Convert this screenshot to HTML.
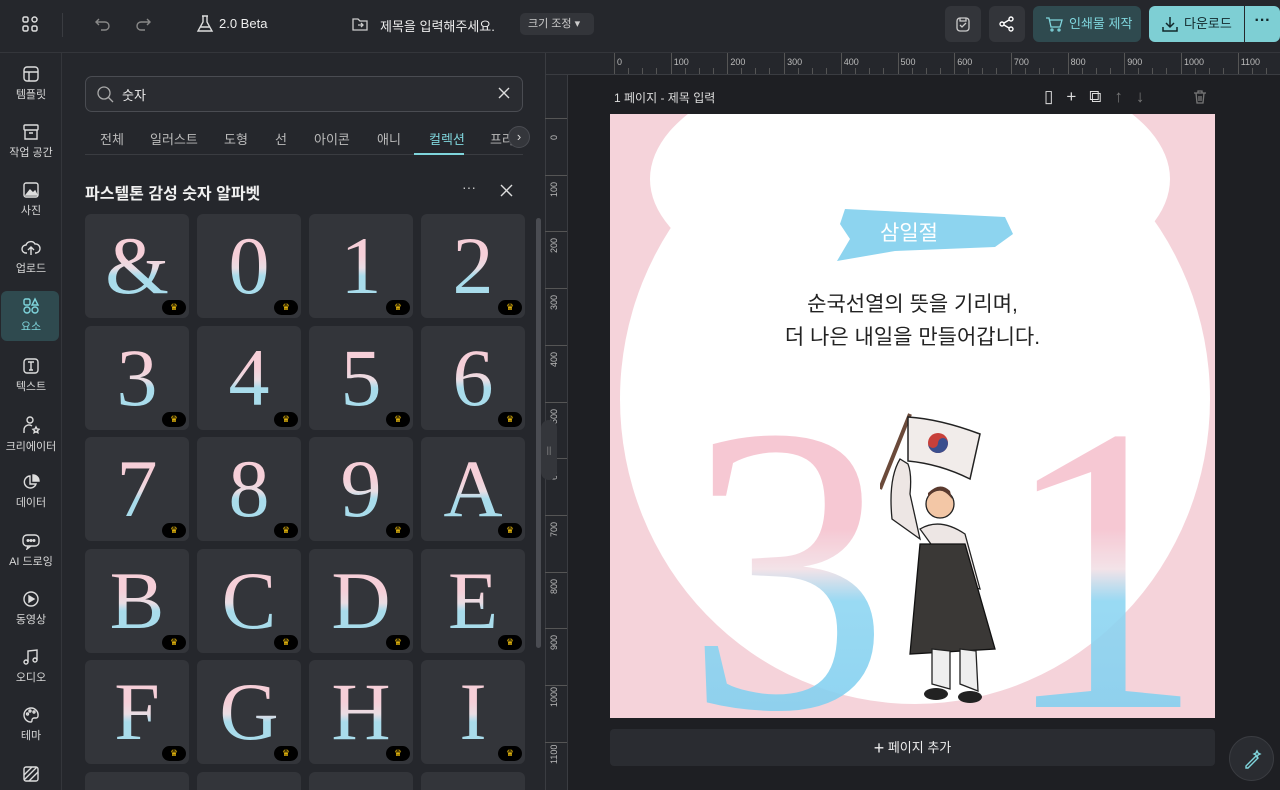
<!DOCTYPE html>
<html style="overflow:hidden;width:1280px;height:790px"><head><meta charset="utf-8"><style>
*{box-sizing:border-box;margin:0;padding:0}
body{width:1280px;height:790px;overflow:hidden;background:#1e1f23;font-family:"Liberation Sans","Noto Sans CJK KR",sans-serif;color:#e6e6e6;position:relative}
.abs{position:absolute}
.top{left:0;top:0;width:1280px;height:53px;background:#25272c;border-bottom:1px solid #34363b}
.rail{left:0;top:53px;width:62px;height:737px;background:#25272c;border-right:1px solid #34363b;overflow:hidden}
.item{position:absolute;left:0;width:62px;text-align:center;font-size:11px;color:#d8d8d8}
.item svg{display:block;margin:0 auto 3px}
.panel{left:62px;top:53px;width:483px;height:737px;background:#25272c;overflow:hidden}
.tile{position:absolute;width:104px;height:104px;background:#33353a;border-radius:6px;overflow:hidden}
.tile span{position:absolute;left:0;right:0;top:2px;text-align:center;font-family:"Liberation Serif",serif;font-size:82px;line-height:100px;background:linear-gradient(#f6cfd8 40%,#eadde3 52%,#a9dceb 60%);-webkit-background-clip:text;background-clip:text;color:transparent}
.crown{position:absolute;right:3px;bottom:3px;width:24px;height:15px;background:#000;border-radius:8px;color:#f4c20d;font-size:9px;text-align:center;line-height:15px}
.btn{position:absolute;top:6px;height:36px;border-radius:6px}
</style></head><body>
<div class="abs top">
 <svg class="abs" style="left:21px;top:15px" width="18" height="18" viewBox="0 0 18 18" fill="none" stroke="#ddd" stroke-width="1.5"><rect x="2" y="2" width="5" height="5" rx="1.5"/><rect x="11" y="2" width="5" height="5" rx="2.5"/><rect x="2" y="11" width="5" height="5" rx="1.5"/><rect x="11" y="11" width="5" height="5" rx="1.5"/></svg>
 <div class="abs" style="left:62px;top:13px;width:1px;height:24px;background:#3a3c41"></div>
 <svg class="abs" style="left:94px;top:15px" width="18" height="18" viewBox="0 0 18 18" fill="none" stroke="#888" stroke-width="1.4"><path d="M5 4L2 7l3 3M2 7h9a4 4 0 010 8H7"/></svg>
 <svg class="abs" style="left:134px;top:15px" width="18" height="18" viewBox="0 0 18 18" fill="none" stroke="#888" stroke-width="1.4"><path d="M13 4l3 3-3 3M16 7H7a4 4 0 000 8h4"/></svg>
 <svg class="abs" style="left:196px;top:14px" width="18" height="20" viewBox="0 0 18 20" fill="none" stroke="#ddd" stroke-width="1.4"><path d="M6 2h6M7 2v6L2 17h14L11 8V2M4 13h10"/></svg>
 <div class="abs" style="left:219px;top:16px;font-size:13px;color:#eee">2.0 Beta</div>
 <svg class="abs" style="left:351px;top:15px" width="18" height="18" viewBox="0 0 18 18" fill="none" stroke="#ccc" stroke-width="1.3"><path d="M2 4h5l2 2h7v9H2z"/><path d="M7 10h5M10 8l2 2-2 2"/></svg>
 <div class="abs" style="left:380px;top:16px;font-size:13px;color:#eee">제목을 입력해주세요.</div>
 <div class="abs" style="left:520px;top:13px;width:74px;height:22px;background:#33353a;border-radius:5px;font-size:11px;color:#ccc;line-height:22px;padding-left:8px">크기 조정 ▾</div>
 <div class="btn" style="left:945px;width:36px;background:#33353a"><svg style="margin:9px" width="18" height="18" viewBox="0 0 18 18" fill="none" stroke="#ccc" stroke-width="1.3"><rect x="3" y="3" width="12" height="13" rx="3"/><path d="M6 3v3h6V3M6 10l2 2 4-4"/></svg></div>
 <div class="btn" style="left:989px;width:36px;background:#33353a"><svg style="margin:9px" width="18" height="18" viewBox="0 0 18 18" fill="none" stroke="#fff" stroke-width="1.4"><circle cx="4" cy="9" r="2"/><circle cx="13" cy="4" r="2"/><circle cx="13" cy="14" r="2"/><path d="M6 8l5-3M6 10l5 3"/></svg></div>
 <div class="btn" style="left:1033px;width:108px;background:#2f4a4f;font-size:13px;line-height:36px;color:#7fd5dc;padding-left:36px">인쇄물 제작<svg class="abs" style="left:12px;top:9px" width="18" height="18" viewBox="0 0 18 18" fill="none" stroke="#7fd5dc" stroke-width="1.3"><path d="M1 3h3l2 9h9l2-7H5"/><circle cx="7" cy="15" r="1"/><circle cx="14" cy="15" r="1"/></svg></div>
 <div class="btn" style="left:1149px;width:95px;background:#7ecfd4;border-radius:6px 0 0 6px;font-size:13px;line-height:36px;color:#12282b;padding-left:35px">다운로드<svg class="abs" style="left:12px;top:9px" width="18" height="18" viewBox="0 0 18 18" fill="none" stroke="#12282b" stroke-width="1.5"><path d="M9 2v9M5 8l4 4 4-4M2 12v4h14v-4"/></svg></div>
 <div class="btn" style="left:1245px;width:35px;background:#7ecfd4;border-radius:0 6px 6px 0;color:#12282b;text-align:center;line-height:30px;font-weight:bold">···</div>
</div>

<div class="abs rail">
 <div class="item" style="top:12px"><svg width="18" height="18" viewBox="0 0 18 18" fill="none" stroke="#ddd" stroke-width="1.4"><rect x="2" y="2" width="14" height="14" rx="3"/><path d="M2 7h14M7 7v9"/></svg>템플릿</div>
 <div class="item" style="top:70px"><svg width="18" height="18" viewBox="0 0 18 18" fill="none" stroke="#ddd" stroke-width="1.4"><rect x="2" y="2" width="14" height="5" rx="1"/><path d="M3 7v9h12V7M7 10h4"/></svg>작업 공간</div>
 <div class="item" style="top:128px"><svg width="18" height="18" viewBox="0 0 18 18" fill="none" stroke="#ddd" stroke-width="1.4"><rect x="2" y="2" width="14" height="14" rx="2"/><path d="M4 14l4-5 3 3 2-2 2 4z" fill="#ddd"/></svg>사진</div>
 <div class="item" style="top:186px"><svg width="20" height="18" viewBox="0 0 20 18" fill="none" stroke="#ddd" stroke-width="1.4"><path d="M6 14H5a4 4 0 010-8 5 5 0 019-1 4 4 0 011 9h-1M10 16V9M7 11l3-3 3 3"/></svg>업로드</div>
 <div class="abs" style="left:1px;top:238px;width:58px;height:50px;background:#2f4a4f;border-radius:6px"></div>
 <div class="item" style="top:244px;color:#7fd5dc"><svg width="18" height="18" viewBox="0 0 18 18" fill="none" stroke="#7fd5dc" stroke-width="1.4"><rect x="2" y="2" width="6" height="6" rx="1.5"/><path d="M13 2l3 6h-6z"/><rect x="2" y="10" width="6" height="6" rx="3"/><rect x="10" y="10" width="6" height="6" rx="3"/></svg>요소</div>
 <div class="item" style="top:304px"><svg width="18" height="18" viewBox="0 0 18 18" fill="none" stroke="#ddd" stroke-width="1.4"><rect x="2" y="2" width="14" height="14" rx="3"/><path d="M6 5h6M9 5v8M7 13h4"/></svg>텍스트</div>
 <div class="item" style="top:362px"><svg width="18" height="20" viewBox="0 0 18 20" fill="none" stroke="#ddd" stroke-width="1.4"><circle cx="8" cy="5" r="3"/><path d="M2 18v-3a5 5 0 018-4"/><path d="M14 12l1 2 2 .3-1.5 1.4.4 2-1.9-1-1.9 1 .4-2L11 14.3l2-.3z"/></svg>크리에이터</div>
 <div class="item" style="top:420px"><svg width="18" height="18" viewBox="0 0 18 18" fill="none" stroke="#ddd" stroke-width="1.4"><path d="M8 3a6 6 0 106 8H8z"/><path d="M11 2v6h6a6 6 0 00-6-6z" fill="#ddd"/></svg>데이터</div>
 <div class="item" style="top:479px"><svg width="20" height="18" viewBox="0 0 20 18" fill="none" stroke="#ddd" stroke-width="1.4"><rect x="2" y="3" width="16" height="11" rx="4"/><path d="M7 14l-1 3 4-3"/><circle cx="7" cy="8.5" r=".8" fill="#ddd"/><circle cx="10" cy="8.5" r=".8" fill="#ddd"/><circle cx="13" cy="8.5" r=".8" fill="#ddd"/></svg>AI 드로잉</div>
 <div class="item" style="top:537px"><svg width="18" height="18" viewBox="0 0 18 18" fill="none" stroke="#ddd" stroke-width="1.4"><circle cx="9" cy="9" r="7"/><path d="M7 6l5 3-5 3z" fill="#ddd"/></svg>동영상</div>
 <div class="item" style="top:595px"><svg width="18" height="18" viewBox="0 0 18 18" fill="none" stroke="#ddd" stroke-width="1.4"><path d="M6 14V3l9-1v10"/><circle cx="4" cy="14" r="2"/><circle cx="13" cy="12" r="2"/></svg>오디오</div>
 <div class="item" style="top:653px"><svg width="18" height="18" viewBox="0 0 18 18" fill="none" stroke="#ddd" stroke-width="1.4"><path d="M9 2a7 7 0 100 14c1 0 1-1 1-2s1-2 2-2h2a2 2 0 002-2 7 7 0 00-7-8z"/><circle cx="5.5" cy="8" r="1"/><circle cx="8" cy="5" r="1"/><circle cx="12" cy="6" r="1"/></svg>테마</div>
 <svg class="abs" style="left:22px;top:712px" width="18" height="18" viewBox="0 0 18 18" fill="none" stroke="#ddd" stroke-width="1.4"><rect x="2" y="2" width="14" height="14" rx="2"/><path d="M2 10l8-8M2 15L15 2M7 16l9-9"/></svg>
</div>

<div class="abs panel">
 <div class="abs" style="left:23px;top:23px;width:438px;height:36px;border:1px solid #4a4c52;border-radius:7px;background:#2a2c31"></div>
 <svg class="abs" style="left:34px;top:32px" width="18" height="18" viewBox="0 0 18 18" fill="none" stroke="#aaa" stroke-width="1.3"><circle cx="8" cy="8" r="6"/><path d="M12.5 12.5L17 17"/></svg>
 <div class="abs" style="left:60px;top:32px;font-size:13px;color:#eee">숫자</div>
 <svg class="abs" style="left:436px;top:34px" width="12" height="12" viewBox="0 0 12 12" stroke="#ddd" stroke-width="1.4"><path d="M1 1l10 10M11 1L1 11"/></svg>
 <div class="abs" style="left:23px;top:76px;font-size:13px;color:#bbb;white-space:nowrap">
  <span style="position:absolute;left:15px">전체</span><span style="position:absolute;left:65px">일러스트</span><span style="position:absolute;left:139px">도형</span><span style="position:absolute;left:190px">선</span><span style="position:absolute;left:229px">아이콘</span><span style="position:absolute;left:292px">애니</span><span style="position:absolute;left:344px;color:#7fd5dc">컬렉션</span><span style="position:absolute;left:405px">프라</span>
 </div>
 <div class="abs" style="left:23px;top:101px;width:438px;height:1px;background:#3a3c41"></div>
 <div class="abs" style="left:352px;top:100px;width:50px;height:2px;background:#7fd5dc"></div>
 <div class="abs" style="left:446px;top:73px;width:22px;height:22px;border-radius:11px;background:#34363b;border:1px solid #4a4c52;color:#ddd;font-size:13px;text-align:center;line-height:19px">›</div>
 <div class="abs" style="left:23px;top:127px;font-size:16px;font-weight:bold;color:#f0f0f0">파스텔톤 감성 숫자 알파벳</div>
 <div class="abs" style="left:400px;top:126px;font-size:14px;color:#ccc">···</div>
 <svg class="abs" style="left:438px;top:131px" width="13" height="13" viewBox="0 0 13 13" stroke="#ddd" stroke-width="1.4"><path d="M1 1l11 11M12 1L1 12"/></svg>
 <div id="tiles" class="abs" style="left:0;top:0;width:483px;height:737px;overflow:hidden"></div>
 <div class="abs" style="left:474px;top:165px;width:5px;height:430px;background:#4a4c52;border-radius:3px"></div>
</div>

<div class="abs" style="left:545px;top:53px;width:735px;height:22px;background:#25272c;border-bottom:1px solid #3a3c41"></div>
<div class="abs" style="left:545px;top:75px;width:23px;height:715px;background:#25272c;border-right:1px solid #3a3c41"></div>
<div class="abs" style="left:545px;top:53px;width:1px;height:737px;background:#3a3c41"></div>
<div id="rul" class="abs" style="left:0;top:0;width:1280px;height:790px;overflow:hidden"></div>
<div class="abs" style="left:541px;top:420px;width:16px;height:60px;background:#34363b;border-radius:8px;color:#888;font-size:9px;text-align:center;line-height:60px">||</div>

<div class="abs" style="left:614px;top:89px;font-size:12px;color:#ddd">1 페이지 - 제목 입력</div>
<div class="abs" style="left:1044px;top:87px;font-size:17px;color:#ddd;letter-spacing:13px">▯+⧉<span style="color:#777">↑↓</span></div>
<svg class="abs" style="left:1192px;top:89px" width="16" height="16" viewBox="0 0 16 16" fill="none" stroke="#777" stroke-width="1.3"><path d="M2 4h12M6 4V2h4v2M4 4l1 10h6l1-10M7 7v5M9 7v5"/></svg>

<div class="abs" style="left:610px;top:114px;width:605px;height:604px;overflow:hidden;background:#f5d3da">
 <div class="abs" style="left:10px;top:-20px;width:590px;height:610px;border-radius:50%;background:#fff"></div>
 <div class="abs" style="left:40px;top:-60px;width:520px;height:250px;border-radius:50%;background:#fff"></div>
 <div class="abs" style="left:75px;top:255px;font-family:'Liberation Serif',serif;font-size:410px;line-height:400px;background:linear-gradient(#f6c3cf 40%,#f2e0e6 50%,#8fd6f2 58%,#7fcdef);-webkit-background-clip:text;background-clip:text;color:transparent;opacity:.9">3</div>
 <div class="abs" style="left:390px;top:255px;font-family:'Liberation Serif',serif;font-size:410px;line-height:400px;background:linear-gradient(#f6c3cf 40%,#f2e0e6 50%,#8fd6f2 58%,#7fcdef);-webkit-background-clip:text;background-clip:text;color:transparent;opacity:.9">1</div>
 <svg class="abs" style="left:225px;top:85px" width="180" height="70" viewBox="0 0 180 70"><path d="M10 10 L170 18 L178 35 L160 48 L60 52 L2 62 L15 40 L5 25z" fill="#8dd4ef"/></svg>
 <div class="abs" style="left:270px;top:103px;font-size:21px;color:#fff">삼일절</div>
 <div class="abs" style="left:0;width:605px;top:174px;text-align:center;font-size:21px;line-height:33px;color:#222">순국선열의 뜻을 기리며,<br>더 나은 내일을 만들어갑니다.</div>
 <svg class="abs" style="left:270px;top:295px" width="130" height="300" viewBox="0 0 130 300">
  <path d="M0 80 L30 5" stroke="#6b4a3a" stroke-width="4"/>
  <path d="M28 8 Q60 10 100 25 L90 70 Q60 55 28 52z" fill="#f1ecea" stroke="#222" stroke-width="1.5"/>
  <circle cx="58" cy="34" r="10" fill="#c8403a"/><path d="M48 34a10 10 0 0020 0 5 5 0 00-10 0 5 5 0 01-10 0" fill="#3b4f8e"/>
  <path d="M20 50 Q8 70 12 110 L40 130 L30 85 Q32 65 28 55z" fill="#ede6e4" stroke="#222" stroke-width="1.3"/>
  <circle cx="60" cy="95" r="14" fill="#f3c7a6" stroke="#222" stroke-width="1.3"/>
  <path d="M48 88 Q60 74 72 90 L70 82 Q60 72 48 84z" fill="#5a3a2e"/>
  <path d="M40 120 Q60 108 85 125 L100 180 L80 175 Z" fill="#ede6e4" stroke="#222" stroke-width="1.3"/>
  <path d="M40 135 L85 135 L115 240 L30 245 Z" fill="#3a3836" stroke="#111" stroke-width="1.3"/>
  <path d="M52 240 L52 275 L70 280 L70 242z M80 240 L80 275 L98 282 L96 242z" fill="#eee" stroke="#222" stroke-width="1.3"/>
  <ellipse cx="56" cy="285" rx="12" ry="6" fill="#222"/><ellipse cx="90" cy="288" rx="12" ry="6" fill="#222"/>
 </svg>
</div>

<div class="abs" style="left:610px;top:729px;width:605px;height:37px;background:#2a2c31;border-radius:4px;text-align:center;font-size:13px;line-height:37px;color:#eee"><span style="font-size:18px;vertical-align:-2px">+</span> 페이지 추가</div>
<div class="abs" style="left:1229px;top:736px;width:45px;height:45px;border-radius:50%;background:#2a2c31;border:1px solid #3a3c41"><svg style="margin:12px" width="20" height="20" viewBox="0 0 20 20" fill="none" stroke="#7fd5dc" stroke-width="1.4"><path d="M4 17l10-10 2 2-10 10H4zM14 4l1-2 1 2 2 1-2 1-1 2-1-2-2-1z"/></svg></div>

<script>
var t='',L=['&','0','1','2','3','4','5','6','7','8','9','A','B','C','D','E','F','G','H','I','','','',''];
var xs=[23,135,247,359],ys=[161,273,384,496,607,719];
for(var i=0;i<24;i++){var x=xs[i%4],r0=Math.floor(i/4),y=ys[r0];var h=r0==5?18:104;t+='<div class="tile" style="left:'+x+'px;top:'+y+'px;height:'+h+'px;'+(r0==5?'border-radius:6px 6px 0 0':'')+'"><span>'+L[i]+'</span>'+(L[i]?'<div class="crown">♛</div>':'')+'</div>';}
document.getElementById('tiles').innerHTML=t;
var r='';for(var n=0;n<=11;n++){var px=614+n*56.7;r+='<div class="abs" style="left:'+px+'px;top:53px;width:1px;height:21px;background:#555"></div><div class="abs" style="left:'+(px+3)+'px;top:57px;font-size:9px;color:#bbb">'+n*100+'</div>';for(var k=1;k<4;k++)r+='<div class="abs" style="left:'+(px+k*14)+'px;top:68px;width:1px;height:6px;background:#555"></div>';}
for(var n=0;n<=11;n++){var py=118+n*56.7;r+='<div class="abs" style="left:545px;top:'+py+'px;width:22px;height:1px;background:#555"></div>';if(py<760)r+='<div class="abs" style="left:549px;top:'+(py+22)+'px;font-size:9px;color:#bbb;transform:rotate(-90deg);transform-origin:0 0">'+n*100+'</div>';}
document.getElementById('rul').innerHTML=r;
</script>
</body></html>
